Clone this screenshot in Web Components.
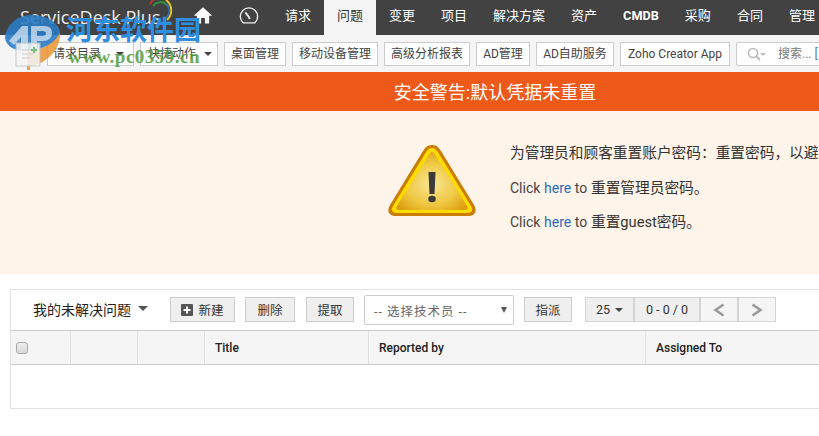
<!DOCTYPE html>
<html lang="zh">
<head>
<meta charset="utf-8">
<title>ServiceDesk Plus</title>
<style>
html, body { margin: 0; padding: 0; background: #fff; overflow: hidden; }
body { width: 819px; height: 436px; font-family: Roboto, "Noto Sans CJK SC", sans-serif; }
</style>
</head>
<body>
<sd-page>
  <top-nav>
    <nav-item>请求</nav-item>
    <nav-item active>问题</nav-item>
    <nav-item>变更</nav-item>
    <nav-item>项目</nav-item>
    <nav-item>解决方案</nav-item>
    <nav-item>资产</nav-item>
    <nav-item strong>CMDB</nav-item>
    <nav-item>采购</nav-item>
    <nav-item>合同</nav-item>
    <nav-item>管理</nav-item>
  </top-nav>
  <tool-bar>
    <tool-btn w="87" caret pad="5" gap="15">请求目录</tool-btn>
    <tool-btn w="78" caret pad="7" gap="8">快捷动作</tool-btn>
    <tool-btn w="62">桌面管理</tool-btn>
    <tool-btn w="86">移动设备管理</tool-btn>
    <tool-btn w="86">高级分析报表</tool-btn>
    <tool-btn w="54">AD管理</tool-btn>
    <tool-btn w="78">AD自助服务</tool-btn>
    <tool-btn w="110">Zoho Creator App</tool-btn>
    <search-box></search-box>
  </tool-bar>
  <alert-banner></alert-banner>
  <issue-panel></issue-panel>
  <water-mark></water-mark>
</sd-page>

<script>
const pageTemplate = document.createElement('template');
pageTemplate.innerHTML = `
<style>
:host { display: block; position: relative; width: 819px; height: 436px; overflow: hidden; }
</style>
<slot></slot>
`;

class SdPage extends HTMLElement {
    connectedCallback() {
        const shadowRoot = this.attachShadow({ mode: 'open' });
        shadowRoot.appendChild(pageTemplate.content.cloneNode(true));
    }
}
customElements.define('sd-page', SdPage);

const topNavTemplate = document.createElement('template');
topNavTemplate.innerHTML = `
<style>
:host { display: block; height: 35px; background: #424242; overflow: hidden; }
.bar { display: flex; height: 35px; align-items: stretch; }
.brand {
    position: relative;
    width: 190px;
    flex: none;
    box-sizing: border-box;
    padding: 5px 0 0 20px;
    color: #ececec;
    font: 18px/24px "Open Sans", sans-serif;
    white-space: nowrap;
}
.brand svg { position: absolute; left: 147px; top: 0; }
.icon { width: 46px; flex: none; display: flex; align-items: center; justify-content: center; }
.home { width: 40px; }
.home svg { margin: -5px 0 0 -14px; }
.gauge { margin-left: -4px; }
.gauge svg { margin-top: -4px; }
</style>
<div class="bar">
    <div class="brand">ServiceDesk Plus
        <svg width="30" height="26" viewBox="0 0 30 26" fill="none">
            <path d="M3 4 A11 11 0 0 1 21 1" stroke="#c8312b" stroke-width="2"/>
            <path d="M6 6 A9 9 0 0 1 20 5" stroke="#2f8f3e" stroke-width="2"/>
            <path d="M19 0 A13 13 0 0 1 20 20" stroke="#e6c229" stroke-width="2"/>
            <path d="M19 4 A9 9 0 0 1 17 19" stroke="#2d6fb7" stroke-width="1.5"/>
        </svg>
    </div>
    <div class="icon home">
        <svg width="20" height="20" viewBox="0 0 26 26">
            <path d="M13 3 L25 14 H21 V24 H15.500 V17 H10.500 V24 H5 V14 H1 Z" fill="#fff"/>
        </svg>
    </div>
    <div class="icon gauge">
        <svg width="20" height="20" viewBox="0 0 22 22" fill="none" stroke="#f0f0f0">
            <path d="M4.500 18.500 A9.500 9.500 0 1 1 17.500 18.500 Z" stroke-width="1.500" stroke-linejoin="round"/>
            <path d="M7 7 L11.500 13" stroke-width="2"/>
            <circle cx="11.500" cy="13.500" r="1.200" fill="#f0f0f0" stroke="none"/>
        </svg>
    </div>
    <slot></slot>
</div>
`;

class TopNav extends HTMLElement {
    connectedCallback() {
        const shadowRoot = this.attachShadow({ mode: 'open' });
        shadowRoot.appendChild(topNavTemplate.content.cloneNode(true));
    }
}
customElements.define('top-nav', TopNav);

const navItemTemplate = document.createElement('template');
navItemTemplate.innerHTML = `
<style>
:host {
    display: block;
    flex: none;
    padding: 0 13px;
    color: #fff;
    font: 13px/31px Roboto, "Noto Sans CJK SC", sans-serif;
    white-space: nowrap;
}
:host([active]) { background: #f5f5f5; color: #333; }
:host([strong]) { font-weight: 700; font-size: 12.700px; }
</style>
<slot></slot>
`;

class NavItem extends HTMLElement {
    connectedCallback() {
        const shadowRoot = this.attachShadow({ mode: 'open' });
        shadowRoot.appendChild(navItemTemplate.content.cloneNode(true));
    }
}
customElements.define('nav-item', NavItem);

const toolBarTemplate = document.createElement('template');
toolBarTemplate.innerHTML = `
<style>
:host {
    display: flex;
    box-sizing: border-box;
    height: 37px;
    background: #f5f5f5;
    padding: 7px 0 0 47px;
    gap: 6px;
    align-items: flex-start;
    overflow: hidden;
}
</style>
<slot></slot>
`;

class ToolBar extends HTMLElement {
    connectedCallback() {
        const shadowRoot = this.attachShadow({ mode: 'open' });
        shadowRoot.appendChild(toolBarTemplate.content.cloneNode(true));
    }
}
customElements.define('tool-bar', ToolBar);

const toolBtnTemplate = document.createElement('template');
toolBtnTemplate.innerHTML = `
<style>
:host {
    display: flex;
    flex: none;
    box-sizing: border-box;
    height: 24px;
    background: #fff;
    border: 1px solid #ccc;
    align-items: center;
    justify-content: center;
    color: #444;
    font: 12px/22px Roboto, "Noto Sans CJK SC", sans-serif;
    white-space: nowrap;
}
:host([caret]) { justify-content: flex-start; }
.caret { display: none; width: 0; height: 0; border: 4px solid transparent; border-top: 4px solid #444; border-bottom: 0; }
:host([caret]) .caret { display: block; }
</style>
<slot></slot><span class="caret"></span>
`;

class ToolBtn extends HTMLElement {
    connectedCallback() {
        const shadowRoot = this.attachShadow({ mode: 'open' });
        shadowRoot.appendChild(toolBtnTemplate.content.cloneNode(true));
        this.style.width = this.getAttribute('w') + 'px';
        if (this.hasAttribute('pad')) {
            this.style.paddingLeft = this.getAttribute('pad') + 'px';
            shadowRoot.querySelector('.caret').style.marginLeft = this.getAttribute('gap') + 'px';
        }
    }
}
customElements.define('tool-btn', ToolBtn);

const searchBoxTemplate = document.createElement('template');
searchBoxTemplate.innerHTML = `
<style>
:host {
    display: flex;
    flex: none;
    box-sizing: border-box;
    width: 120px;
    height: 24px;
    background: #fff;
    border: 1px solid #ccc;
    border-radius: 2px;
    align-items: center;
    padding-left: 10px;
    color: #777;
    font: 12px/22px Roboto, "Noto Sans CJK SC", sans-serif;
    white-space: nowrap;
}
svg { margin-right: 12px; }
b { margin-left: 3px; font-weight: 400; color: #4a80c0; }
</style>
<svg width="19" height="14" viewBox="0 0 19 14" fill="none">
    <circle cx="6" cy="6" r="4.500" stroke="#bbb" stroke-width="1.600"/>
    <path d="M9.500 9.500 L13 13" stroke="#bbb" stroke-width="2"/>
    <path d="M13 6 H19 L16 9 Z" fill="#bbb"/>
</svg>
<span>搜索...</span><b>[</b>
`;

class SearchBox extends HTMLElement {
    connectedCallback() {
        const shadowRoot = this.attachShadow({ mode: 'open' });
        shadowRoot.appendChild(searchBoxTemplate.content.cloneNode(true));
    }
}
customElements.define('search-box', SearchBox);

const alertTemplate = document.createElement('template');
alertTemplate.innerHTML = `
<style>
:host { display: block; width: 990px; }
.title {
    height: 39px;
    background: #ee5818;
    color: #fff;
    text-align: center;
    font: 18px/41px Roboto, "Noto Sans CJK SC", sans-serif;
}
.body {
    display: flex;
    box-sizing: border-box;
    height: 163px;
    background: #fff4e9;
    padding: 25px 0 0 387px;
    color: #333;
    font: 14.7px/34.500px Roboto, "Noto Sans CJK SC", sans-serif;
    white-space: nowrap;
    overflow: hidden;
}
svg { flex: none; margin: 7px 33px 0 0; }
p { margin: 0; }
a { color: #2a6ebb; text-decoration: none; font-size: 14px; }
.en { color: #444; font-size: 14px; }
</style>
<div class="title">安全警告:默认凭据未重置</div>
<div class="body">
    <svg width="90" height="76" viewBox="0 0 90 76">
        <defs>
            <radialGradient id="warnFill" cx="50%" cy="55%" r="60%">
                <stop offset="0" stop-color="#f9e596"/>
                <stop offset="0.6" stop-color="#f0c842"/>
                <stop offset="1" stop-color="#dd9f12"/>
            </radialGradient>
        </defs>
        <path d="M45 2 C40 2 38 5 36 8 L3 62 C-1 69 3 73 9 73 H81 C87 73 91 69 87 62 L54 8 C52 5 50 2 45 2 Z" fill="#cc7d05"/>
        <path d="M45 5 C42 5 40 7 38.500 10 L6 63 C3.500 67 5 70 10 70 H80 C85 70 86.500 67 84 63 L51.500 10 C50 7 48 5 45 5 Z" fill="#ffdc00"/>
        <path d="M45 9 C43 9 42 11 41 13 L10 63 C8 66 10 67 12 67 H78 C80 67 82 66 80 63 L49 13 C48 11 47 9 45 9 Z" fill="url(#warnFill)"/>
        <path d="M41.500 29 H48.500 L47.500 51 H42.500 Z" fill="#3a3a3a"/>
        <ellipse cx="45" cy="56" rx="3.800" ry="3.200" fill="#3a3a3a"/>
    </svg>
    <div>
        <p>为管理员和顾客重置账户密码：重置密码，以避免安全风险</p>
        <p><span class="en">Click</span> <a>here</a> <span class="en">to</span> 重置管理员密码。</p>
        <p><span class="en">Click</span> <a>here</a> <span class="en">to</span> 重置guest密码。</p>
    </div>
</div>
`;

class AlertBanner extends HTMLElement {
    connectedCallback() {
        const shadowRoot = this.attachShadow({ mode: 'open' });
        shadowRoot.appendChild(alertTemplate.content.cloneNode(true));
    }
}
customElements.define('alert-banner', AlertBanner);

const panelTemplate = document.createElement('template');
panelTemplate.innerHTML = `
<style>
:host {
    display: block;
    box-sizing: border-box;
    width: 830px;
    height: 120px;
    margin: 15px 0 0 10px;
    border: 1px solid #e2e2e2;
    font: 12px Roboto, "Noto Sans CJK SC", sans-serif;
    color: #333;
}
.actions { display: flex; height: 40px; box-sizing: border-box; padding-top: 7px; align-items: flex-start; }
.view { display: flex; align-items: center; width: 137px; flex: none; padding-left: 22px; box-sizing: border-box; height: 23px; color: #222; font-size: 14px; white-space: nowrap; }
.caret { width: 0; height: 0; border: 5px solid transparent; border-top: 5px solid #555; border-bottom: 0; margin-left: 7px; }
.btn {
    display: flex;
    flex: none;
    box-sizing: border-box;
    height: 25px;
    align-items: center;
    justify-content: center;
    background: #efefef;
    border: 1px solid #ccc;
    font-size: 12.500px;
    white-space: nowrap;
}
.btn svg { margin-right: 5px; }
.select {
    display: flex;
    flex: none;
    box-sizing: border-box;
    width: 150px;
    height: 30px;
    margin: -2px 10px 0 10px;
    padding: 0 6px 0 9px;
    align-items: center;
    justify-content: space-between;
    background: #fff;
    border: 1px solid #ccc;
    border-radius: 2px;
    color: #666;
    font-size: 12.500px;
    letter-spacing: 1px;
    white-space: nowrap;
}
.select i { width: 0; height: 0; border: 3.500px solid transparent; border-top: 6px solid #555; border-bottom: 0; }
.pager { display: flex; margin-left: 13px; }
.pager .btn { border-color: #d4d4d4; }
.nav { background: #f5f5f5; border-color: #e2e2e2; }
.small-caret { width: 0; height: 0; border: 4px solid transparent; border-top: 4px solid #444; border-bottom: 0; margin-left: 5px; }
.head {
    display: grid;
    grid-template-columns: 60px 67px 67px 164px 277px 1fr;
    grid-template-rows: 33px;
    height: 35px;
    box-sizing: border-box;
    background: #f5f5f5;
    border-top: 1px solid #ccc;
    border-bottom: 1px solid #ccc;
}
.head div {
    box-sizing: border-box;
    border-right: 1px solid #e0e0e0;
    padding: 1px 0 0 10px;
    font-weight: 500;
    font-size: 12px;
    line-height: 32px;
    color: #222;
    white-space: nowrap;
}
.head div:first-child { padding: 0 0 0 5px; display: flex; align-items: center; }
.check { width: 12px; height: 12px; box-sizing: border-box; border: 1px solid #aaa; border-radius: 3px; background: linear-gradient(#eee, #d8d8d8); }
</style>
<div class="actions">
    <div class="view">我的未解决问题<span class="caret"></span></div>
    <div class="btn" style="width:65px;margin-left:22px">
        <svg width="12" height="12" viewBox="0 0 12 12"><rect width="12" height="12" rx="1" fill="#555"/><path d="M6 2.500 V9.500 M2.500 6 H9.500" stroke="#fff" stroke-width="2"/></svg>新建
    </div>
    <div class="btn" style="width:50px;margin-left:10px">删除</div>
    <div class="btn" style="width:48px;margin-left:11px">提取</div>
    <div class="select"><span>-- 选择技术员 --</span><i></i></div>
    <div class="btn" style="width:48px">指派</div>
    <div class="pager">
        <div class="btn" style="width:49px">25<span class="small-caret"></span></div>
        <div class="btn" style="width:66px">0 - 0 / 0</div>
        <div class="btn nav" style="width:38px">
            <svg style="margin:0" width="12" height="14" viewBox="0 0 12 14" fill="none"><path d="M10.500 1.500 L2.500 7 L10.500 12.500" stroke="#999" stroke-width="2.500"/></svg>
        </div>
        <div class="btn nav" style="width:38px">
            <svg style="margin:0" width="12" height="14" viewBox="0 0 12 14" fill="none"><path d="M1.500 1.500 L9.500 7 L1.500 12.500" stroke="#999" stroke-width="2.500"/></svg>
        </div>
    </div>
</div>
<div class="head">
    <div><span class="check"></span></div>
    <div></div>
    <div></div>
    <div>Title</div>
    <div>Reported by</div>
    <div style="border-right:0">Assigned To</div>
</div>
`;

class IssuePanel extends HTMLElement {
    connectedCallback() {
        const shadowRoot = this.attachShadow({ mode: 'open' });
        shadowRoot.appendChild(panelTemplate.content.cloneNode(true));
    }
}
customElements.define('issue-panel', IssuePanel);

// site watermark lying over the header
const waterMarkTemplate = document.createElement('template');
waterMarkTemplate.innerHTML = `
<style>
:host { display: block; position: absolute; left: 0; top: 0; width: 240px; height: 72px; pointer-events: none; }
svg { position: absolute; left: 0; top: 0; }
.name {
    position: absolute;
    left: 66px;
    top: 11px;
    color: #2e8fe0;
    font: 700 27px/36px "Noto Sans CJK SC", sans-serif;
    white-space: nowrap;
}
.url {
    position: absolute;
    left: 68px;
    top: 45px;
    color: #4f9c3c;
    font: 700 19px/24px "Liberation Serif", serif;
    letter-spacing: .5px;
    white-space: nowrap;
    opacity: .85;
}
</style>
<svg width="70" height="72" viewBox="0 0 70 72">
    <path d="M60 32 C61 50 46 64 30 66 V70 H27 V51 C40 51 54 44 60 32 Z" fill="#ec9a3c" opacity=".9"/>
    <path d="M32 15 C17 15 6 25 5 38 C6 46 14 50 22 51 C38 52 56 44 60 32 C58 22 46 15 32 15 Z" fill="#2a7cc4" opacity=".9"/>
    <path d="M9 41 L22 26 H28 V52 H21 V37 L14 45 Z" fill="#fff" opacity=".6"/>
    <path d="M31 26 H44 C50 26 52 29 52 33 C52 38 48 41 43 41 H37 V50 H31 Z M37 31 V36 H42 C45 36 46 35 46 33 C46 32 45 31 42 31 Z" fill="#fff" opacity=".6"/>
    <rect x="16" y="43" width="24" height="23" fill="#f5f5f5" stroke="#c4c4c4" opacity=".85"/>
    <path d="M22 50 H33 M22 54 H33 M22 58 H31" stroke="#ccc"/>
    <path d="M31 50 h6 M34 47 v6" stroke="#6fc67e" stroke-width="2"/>
</svg>
<span class="name">河东软件园</span>
<span class="url">www.pc0359.cn</span>
`;

class WaterMark extends HTMLElement {
    connectedCallback() {
        const shadowRoot = this.attachShadow({ mode: 'open' });
        shadowRoot.appendChild(waterMarkTemplate.content.cloneNode(true));
    }
}
customElements.define('water-mark', WaterMark);
</script>
</body>
</html>
